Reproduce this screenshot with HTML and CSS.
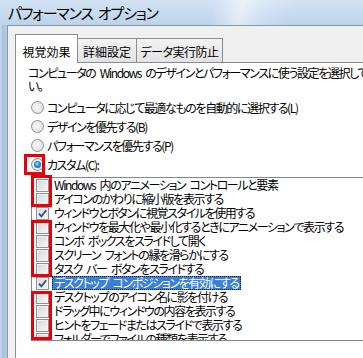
FILE: index.html
```html
<!DOCTYPE html>
<html lang="ja">
<head>
    <meta charset="UTF-8">
    <meta name="viewport" content="width=device-width, initial-scale=1.0">
    <title>パフォーマンス オプション</title>
    <link rel="stylesheet" href="styles.css">
</head>
<body>
    <div class="window">
        <div class="titlebar">パフォーマンス オプション</div>
        <div class="client">
            <div class="tabs">
                <div class="tab active">視覚効果</div>
                <div class="tab tab-detail">詳細設定</div>
                <div class="tab tab-dep">データ実行防止</div>
            </div>
            <div class="panel">
                <p class="intro">コンピュータの Windows のデザインとパフォーマンスに使う設定を選択してくださ<br>い。</p>

                <div class="radios">
                    <div class="radio"><span class="dot"></span>コンピュータに応じて最適なものを自動的に選択する(L)</div>
                    <div class="radio"><span class="dot"></span>デザインを優先する(B)</div>
                    <div class="radio"><span class="dot"></span>パフォーマンスを優先する(P)</div>
                    <div class="radio checked"><span class="dot"></span>カスタム(C):<span class="mark mark-radio"></span></div>
                </div>

                <div class="list-wrap">
                    <div class="list">
                        <div class="item"><span class="box"></span><span class="label">Windows 内のアニメーション コントロールと要素</span></div>
                        <div class="item"><span class="box"></span><span class="label">アイコンのかわりに縮小版を表示する</span></div>
                        <div class="item"><span class="box"><svg viewBox="0 0 11 11"><path d="M2 5.6 L4.4 8.3 L9.2 2.2"/></svg></span><span class="label">ウィンドウとボタンに視覚スタイルを使用する</span></div>
                        <div class="item"><span class="box"></span><span class="label">ウィンドウを最大化や最小化するときにアニメーションで表示する</span></div>
                        <div class="item"><span class="box"></span><span class="label">コンボ ボックスをスライドして開く</span></div>
                        <div class="item"><span class="box"></span><span class="label">スクリーン フォントの縁を滑らかにする</span></div>
                        <div class="item"><span class="box"></span><span class="label">タスク バー ボタンをスライドする</span></div>
                        <div class="item selected"><span class="box"><svg viewBox="0 0 11 11"><path d="M2 5.6 L4.4 8.3 L9.2 2.2"/></svg></span><span class="label">デスクトップ コンポジションを有効にする</span></div>
                        <div class="item"><span class="box"></span><span class="label">デスクトップのアイコン名に影を付ける</span></div>
                        <div class="item"><span class="box"></span><span class="label">ドラッグ中にウィンドウの内容を表示する</span></div>
                        <div class="item"><span class="box"></span><span class="label">ヒントをフェードまたはスライドで表示する</span></div>
                        <div class="item"><span class="box"></span><span class="label">フォルダーでファイルの種類を表示する</span></div>
                    </div>
                    <!-- red annotation frames -->
                    <span class="mark mark-a"></span>
                    <span class="mark mark-b"></span>
                    <span class="mark mark-c"></span>
                </div>
            </div>
        </div>
    </div>
</body>
</html>
```

FILE: styles.css
```css
/* Page */
body {
    margin: 0;
    width: 363px;
    height: 358px;
    overflow: hidden;
    font-family: "Noto Sans CJK JP", "Noto Sans", sans-serif;
    font-size: 12px;
    font-feature-settings: "palt";
    color: #000;
}

/* Window frame */
.window {
    height: 358px;
    display: flex;
    flex-direction: column;
    background: linear-gradient(to right, #c9dbef 0, #a9c2de 3px, #b7cce5 7px, #b7cce5 100%);
}

.titlebar {
    height: 25px;
    padding-left: 8px;
    line-height: 26px;
    font-size: 15px;
    letter-spacing: -1.2px;
    word-spacing: 3px;
    white-space: nowrap;
    background:
        linear-gradient(105deg, transparent 58%, rgba(255, 255, 255, 0.55) 66%, rgba(255, 255, 255, 0.2) 72%, transparent 80%),
        linear-gradient(to bottom, #d3e3f4, #bed3ea);
}

.client {
    flex: 1;
    margin-left: 7px;
    border-left: 1px solid #8397ae;
    border-top: 1px solid #8397ae;
    background: #f0f0f0;
    padding: 8px 0 0 7px;
    display: flex;
    flex-direction: column;
}

/* Tabs */
.tabs {
    display: flex;
    align-items: flex-end;
    height: 28px;
}

.tab {
    box-sizing: border-box;
    height: 24px;
    padding-top: 6px;
    line-height: 14px;
    text-align: center;
    white-space: nowrap;
    border: 1px solid #898c95;
    border-bottom: none;
    background: linear-gradient(to bottom, #f3f3f3, #e3e3e3);
}

.tab + .tab {
    border-left: none;
}

.tab.active {
    width: 63px;
    height: 29px;
    padding-top: 10px;
    margin-bottom: -1px;
    background: #fff;
    position: relative;
    z-index: 1;
}

.tab-detail {
    width: 59px;
}

.tab-dep {
    width: 86px;
    letter-spacing: -0.5px;
}

/* Tab page */
.panel {
    flex: 1;
    background: #fff;
    border: 1px solid #898c95;
    border-right: none;
    border-bottom: none;
    padding-left: 12px;
    letter-spacing: -1.4px;
    word-spacing: 3px;
}

.intro {
    margin: 0;
    padding-top: 3px;
    line-height: 13px;
    white-space: nowrap;
}

.radios {
    margin: 6px 0 0 3px;
}

.radio {
    height: 19px;
    display: flex;
    align-items: center;
    white-space: nowrap;
    position: relative;
}

.dot {
    box-sizing: border-box;
    width: 13px;
    height: 13px;
    margin-right: 3px;
    border: 1px solid #8e8f8f;
    border-radius: 50%;
    background: radial-gradient(circle at 45% 45%, #f9f9f9 0, #e2e2e2 70%, #d5d5d5 100%);
    display: flex;
    align-items: center;
    justify-content: center;
}

.radio.checked .dot::after {
    content: "";
    width: 7px;
    height: 7px;
    border-radius: 50%;
    background: radial-gradient(circle at 45% 40%, #9fdcff 0, #2f8ad6 45%, #0f4f92 100%);
}

/* Check list */
.list-wrap {
    margin: 3px 0 0 3px;
    position: relative;
}

.list {
    height: 162px;
    border: 1px solid #828790;
    border-right: none;
    overflow: hidden;
}

.item {
    height: 14px;
    display: flex;
    align-items: center;
    padding-left: 4px;
    white-space: nowrap;
}

.box {
    box-sizing: border-box;
    width: 13px;
    height: 13px;
    margin-right: 3px;
    flex: none;
    border: 1px solid #8e8f8f;
    background: linear-gradient(135deg, #d3d6da, #f7f7f7);
    box-shadow: inset 0 0 0 1px #f2f2f2;
}

.box svg {
    display: block;
    width: 11px;
    height: 11px;
}

.box svg path {
    fill: none;
    stroke: #2f4f8f;
    stroke-width: 1.8;
}

.label {
    padding: 0 2px;
    line-height: 14px;
}

.item.selected .label {
    background: #3a7fd6;
    color: #fff;
    outline: 1px dotted #1c1c1c;
    outline-offset: -1px;
}

/* Red annotation frames */
.mark {
    position: absolute;
    box-sizing: border-box;
    border: 3px solid #e8000b;
    width: 21px;
    left: 0;
}

.mark-radio {
    left: -7px;
    top: -1px;
    height: 21px;
}

.mark-a {
    top: -2px;
    height: 32px;
}

.mark-b {
    top: 43px;
    height: 57px;
}

.mark-c {
    top: 114px;
    height: 49px;
}
```
